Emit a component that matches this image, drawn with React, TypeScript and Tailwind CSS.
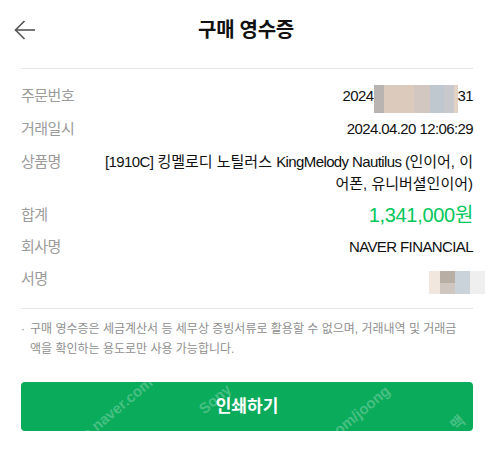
import React from "react";

const FONT = { fontFamily: '"Liberation Sans", "Noto Sans CJK KR", sans-serif' };

function Row({ label, children, className = "" }: { label: string; children: React.ReactNode; className?: string }) {
  return (
    <div className={`flex items-start ${className}`}>
      <div className="w-[76px] shrink text-[15px] leading-[22px] tracking-[-0.5px] text-[#9b9b9b]">{label}</div>
      <div className="flex-1 whitespace-nowrap text-right text-[15px] leading-[22px] text-[#111]">{children}</div>
    </div>
  );
}

function Marks() {
  return (
    <div className="pointer-events-none absolute inset-0 overflow-hidden text-[15px] text-white/25">
      <span className="absolute left-[34px] top-[22px] -rotate-[40deg] whitespace-nowrap">cafe.naver.com</span>
      <span className="absolute left-[176px] top-[6px] -rotate-[40deg] whitespace-nowrap">Sony</span>
      <span className="absolute left-[300px] top-[20px] -rotate-[40deg] whitespace-nowrap">com/joong</span>
      <span className="absolute left-[430px] top-[30px] -rotate-[40deg] whitespace-nowrap">맥</span>
    </div>
  );
}

export default function App() {
  return (
    <div className="w-[492px] h-[470px] bg-white overflow-hidden" style={FONT}>
      {/* 헤더 */}
      <div className="grid h-[60px] grid-cols-[1fr_auto_1fr] items-center">
        <div className="pl-[14px]">
          <svg width="22" height="20" viewBox="0 0 22 20" fill="none" stroke="#555" strokeWidth="1.6">
            <path d="M1.5 10 H21" />
            <path d="M10.5 1 L1.5 10 L10.5 19" />
          </svg>
        </div>
        <h1 className="text-[20px] font-bold tracking-[-0.3px] text-[#111]">구매 영수증</h1>
        <div />
      </div>

      <div className="pl-[21px] pr-[19px]">
        <div className="mt-[8px] h-px bg-[#e3e3e3]" />

        {/* 내역 */}
        <div className="flex flex-col pt-[16px] pb-[14px]">
          <Row label="주문번호">
            <span className="inline-flex h-[22px] items-center align-top tracking-[-0.6px]">
              <span>2024</span>
              <span className="-mb-[6px] flex h-[28px]">
                <span className="w-[10px] bg-[#b9b3b1]" />
                <span className="w-[30px] bg-[#dccabd]" />
                <span className="w-[16px] bg-[#d2c8c1]" />
                <span className="w-[14px] bg-[#bfc7cf]" />
                <span className="w-[10px] bg-[#c8c9cd]" />
                <span className="w-[4px] bg-[#e2d2c5]" />
              </span>
              <span>31</span>
            </span>
          </Row>
          <Row label="거래일시" className="mt-[11px]">
            <span className="tracking-[-0.6px]">2024.04.20 12:06:29</span>
          </Row>
          <Row label="상품명" className="mt-[11px]">
            <span className="tracking-[-0.6px]">[1910C]</span> 킹멜로디 노틸러스{" "}
            <span className="tracking-[-0.6px]">KingMelody Nautilus (</span>인이어, 이
            <br />
            어폰, 유니버셜인이어)
          </Row>
          <div className="mt-[9px] flex items-center">
            <div className="w-[76px] flex-none text-[15px] leading-[22px] tracking-[-0.5px] text-[#9b9b9b]">합계</div>
            <div className="flex-1 text-right text-[20px] leading-[22px] tracking-[-0.3px] text-[#03c75a]">1,341,000원</div>
          </div>
          <Row label="회사명" className="mt-[10px]">
            <span className="tracking-[-0.6px]">NAVER FINANCIAL</span>
          </Row>
          <div className="mt-[10px] flex items-start">
            <div className="w-[76px] flex-none text-[15px] leading-[22px] tracking-[-0.5px] text-[#9b9b9b]">서명</div>
            <div className="flex flex-1 justify-end -mr-[12px] pt-[3px]">
              <div className="flex h-[23px]">
                <div className="w-[11px] bg-[#f1e7df]" />
                <div className="flex w-[15px] flex-col">
                  <div className="flex-1 bg-[#b8aea4]" />
                  <div className="flex-1 bg-[#cec6bf]" />
                </div>
                <div className="w-[15px] bg-[#cad3d9]" />
                <div className="w-[15px] bg-[#efefef]" />
              </div>
            </div>
          </div>
        </div>

        <div className="h-px bg-[#e3e3e3]" />

        {/* 안내 */}
        <div className="flex pt-[10px] text-[12px] leading-[20px] text-[#8f8f8f]">
          <span className="w-[9px] flex-none">·</span>
          <p>
            구매 영수증은 세금계산서 등 세무상 증빙서류로 활용할 수 없으며, 거래내역 및 거래금
            <br />
            액을 확인하는 용도로만 사용 가능합니다.
          </p>
        </div>

        <button className="relative mt-[23px] flex h-[49px] w-full items-center justify-center rounded-[4px] bg-[#0aab5b] text-[17px] font-bold text-white">
          <Marks />
          <span className="relative">인쇄하기</span>
        </button>
      </div>
    </div>
  );
}
